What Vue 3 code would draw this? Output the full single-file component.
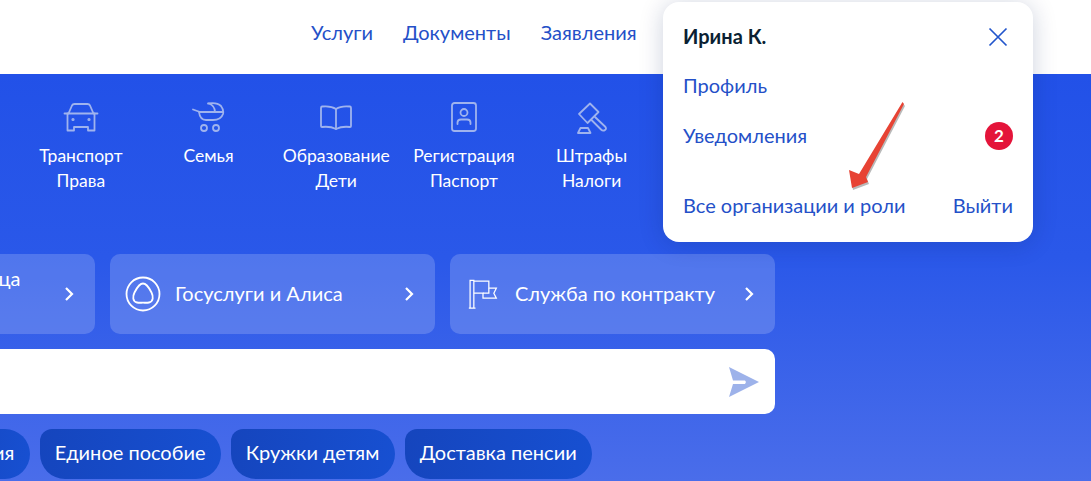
<script setup>
const topics = [
  { id: 'car', lines: ['Транспорт', 'Права'] },
  { id: 'pram', lines: ['Семья'] },
  { id: 'book', lines: ['Образование', 'Дети'] },
  { id: 'pass', lines: ['Регистрация', 'Паспорт'] },
  { id: 'gavel', lines: ['Штрафы', 'Налоги'] }
]
const chips = ['Пенсия', 'Единое пособие', 'Кружки детям', 'Доставка пенсии']
</script>

<template>
  <div class="page">
    <header class="top">
      <nav class="nav">
        <a>Услуги</a><a>Документы</a><a>Заявления</a>
      </nav>
    </header>
    <main class="hero">
      <ul class="topics">
        <li v-for="t in topics" :key="t.id" class="topic">
          <svg class="ticon" viewBox="0 0 36 32" fill="none" stroke="currentColor" stroke-width="1.800" stroke-linecap="round" stroke-linejoin="round">
            <template v-if="t.id === 'car'">
              <path d="M1.500 11.500H34.500" />
              <path d="M5.500 11.500 9 3.500Q9.700 2 11.500 2H24.500Q26.300 2 27 3.500L30.500 11.500" />
              <path d="M4.500 11.500V28.500H11V25H25V28.500H31.500V11.500" />
              <circle cx="10" cy="17.500" r=".7" />
              <circle cx="26" cy="17.500" r=".7" />
            </template>
            <template v-else-if="t.id === 'pram'">
              <path d="M2 7.500 9 10H32" />
              <path d="M17 1.500Q26 0 30 4Q33 8 32 12Q30 18 22 18H15Q9 18 8 10" />
              <path d="M18 1.500Q24 4 24 10" />
              <circle cx="13" cy="26" r="3" />
              <circle cx="25" cy="26" r="3" />
            </template>
            <template v-else-if="t.id === 'book'">
              <path d="M18 7Q13 3.500 4 4.500Q3 4.700 3 6V24Q3 25 4 25Q12 24 18 27Q24 24 32 25Q33 25 33 24V6Q33 4.700 32 4.500Q23 3.500 18 7Z" />
              <path d="M18 7V27" />
            </template>
            <template v-else-if="t.id === 'pass'">
              <rect x="6" y="1" width="24" height="28" rx="2.500" />
              <circle cx="18" cy="10.500" r="3.500" />
              <path d="M11.500 22V20.500Q11.500 17.500 15 17.500H21Q24.500 17.500 24.500 20.500V22" />
            </template>
            <template v-else>
              <path d="M16 1.500 5 12 13.500 21 24.500 10Z" />
              <path d="M21 15 31 24.500Q33 26.500 31 28Q29 29.500 27 27.500L17.500 18" />
              <path d="M4 31 6.500 26H14L16.500 31Z" />
            </template>
          </svg>
          <div class="tlabel"><span v-for="l in t.lines" :key="l">{{ l }}</span></div>
        </li>
      </ul>

      <div class="cards">
        <a class="card">
          <span class="ctext first">Мои данные для лица<br>ИП</span>
          <svg class="chev" viewBox="0 0 10 16" fill="none" stroke="currentColor" stroke-width="2.200"><path d="M2 2l6 6-6 6" /></svg>
        </a>
        <a class="card">
          <svg class="cicon" viewBox="0 0 36 36" fill="none" stroke="currentColor" stroke-width="1.800">
            <circle cx="18" cy="18" r="16.500" />
            <path d="M18 7.500C14 7.500 11.500 12.500 9.500 16.500C7.500 20.500 7.500 25.500 12 26.500C14.500 27 16 26.700 18 26.700C20 26.700 21.500 27 24 26.500C28.500 25.500 28.500 20.500 26.500 16.500C24.500 12.500 22 7.500 18 7.500Z" />
          </svg>
          <span class="ctext">Госуслуги и Алиса</span>
          <svg class="chev" viewBox="0 0 10 16" fill="none" stroke="currentColor" stroke-width="2.200"><path d="M2 2l6 6-6 6" /></svg>
        </a>
        <a class="card">
          <svg class="cicon flag" viewBox="0 0 36 36" fill="none" stroke="currentColor" stroke-width="1.500">
            <path d="M1 35H9M2.500 35V1.500H7V35" />
            <path d="M7 2.500H25V11H34L31 17 34 23H18V17H7" />
            <path d="M25 11V17H18" />
          </svg>
          <span class="ctext">Служба по контракту</span>
          <svg class="chev" viewBox="0 0 10 16" fill="none" stroke="currentColor" stroke-width="2.200"><path d="M2 2l6 6-6 6" /></svg>
        </a>
      </div>

      <div class="search">
        <svg class="send" viewBox="0 0 30 30"><path d="M0 0 30 15 0 30 4 17H16L17 15 16 13.500H4Z" /></svg>
      </div>

      <div class="chips">
        <a v-for="c in chips" :key="c" class="chip">{{ c }}</a>
      </div>
    </main>

    <aside class="menu">
      <div class="mhead">
        <strong>Ирина К.</strong>
        <svg class="close" viewBox="0 0 20 20" fill="none" stroke="currentColor" stroke-width="1.700"><path d="M1.500 1.500 18.500 18.500M18.500 1.500 1.500 18.500" /></svg>
      </div>
      <a class="mrow">Профиль</a>
      <a class="mrow note"><span class="ntext">Уведомления</span> <span class="badge">2</span></a>
      <div class="mfoot"><a>Все организации и роли</a><a>Выйти</a></div>
    </aside>

    <svg class="arrow" viewBox="0 0 70 100">
      <path class="ashadow" d="M55.500 3 57 5 19 78 21 83 5 89 2 71 12 75Z" />
      <path class="ahead" d="M54.500 1 56 3 18 76 20 81 4 87 1 69 11 73Z" />
    </svg>
  </div>
</template>

<style>
html, body { margin: 0; background: #fff; }
</style>

<style scoped>
.page {
  position: relative;
  width: 1091px;
  height: 481px;
  overflow: hidden;
  font-family: Lato, "Noto Sans", sans-serif;
  font-size: 20px;
  background: #fff;
}
.top { height: 74px; box-sizing: border-box; padding: 20px 0 0 311px; }
.nav { display: flex; gap: 30px; line-height: 24px; color: #2450c8; }
.hero {
  height: 407px;
  box-sizing: border-box;
  padding-top: 28px;
  color: #fff;
  background: linear-gradient(180deg, #2251e8 0%, #2a58e9 45%, #4a6dea 100%);
}
.topics { display: flex; list-style: none; margin: 0; padding: 0 0 0 17px; font-size: 17.500px; line-height: 25px; }
.topic { width: 127.700px; display: flex; flex-direction: column; align-items: center; }
.ticon { width: 36px; height: 32px; color: #9fb3ee; margin-bottom: 9px; }
.tlabel { display: flex; flex-direction: column; align-items: center; }
.cards { display: flex; gap: 15px; margin: 61px 0 0 -230px; }
.card {
  flex: none;
  box-sizing: border-box;
  width: 325px;
  height: 80px;
  padding: 0 21px 0 15px;
  display: flex;
  align-items: center;
  border-radius: 10px;
  background: rgba(255, 255, 255, .18);
}
.ctext { flex: 1; padding-bottom: 2px; }
.ctext.first { padding-left: 30px; line-height: 30px; }
.cicon { width: 36px; height: 36px; margin-right: 14px; flex: none; }
.cicon.flag { width: 30px; height: 30px; margin: 0 17px 0 3px; }
.chev { width: 10px; height: 16px; flex: none; }
.search {
  box-sizing: border-box;
  width: 775px;
  height: 65px;
  margin-top: 15px;
  padding-right: 16px;
  display: flex;
  align-items: center;
  justify-content: flex-end;
  background: #fff;
  border-radius: 0 10px 10px 0;
}
.send { width: 30px; height: 30px; fill: #9db2ea; }
.chips { display: flex; gap: 10px; margin: 15px 0 0 -68px; }
.chip {
  flex: none;
  height: 50px;
  line-height: 47px;
  padding: 0 15.200px;
  border-radius: 12px 25px 25px 25px;
  background: linear-gradient(100deg, #1545bd, #1750d2);
}
.menu {
  position: absolute;
  left: 663px;
  top: 2px;
  width: 370px;
  height: 240px;
  box-sizing: border-box;
  padding: 0 20px;
  background: #fff;
  border-radius: 16px;
  box-shadow: 0 2px 24px rgba(0, 30, 90, .2);
  color: #2450c8;
  line-height: 24px;
}
.mhead { display: flex; justify-content: space-between; align-items: flex-start; padding-top: 21px; color: #0b1f33; }
.mhead strong { font-weight: 700; margin-top: 1px; margin-bottom: -1px; }
.close { width: 20px; height: 20px; color: #2255cc; margin: 4px 5px 0 0; }
.mrow { display: flex; margin-top: 26px; }
.note { justify-content: space-between; align-items: center; margin-top: 25px; }
.ntext { padding-bottom: 2px; }
.badge {
  width: 28px;
  height: 28px;
  border-radius: 50%;
  background: #e4143a;
  color: #fff;
  font-weight: 700;
  font-size: 17px;
  text-align: center;
  line-height: 28px;
}
.mfoot { display: flex; justify-content: space-between; margin-top: 43px; }
.arrow { position: absolute; left: 848px; top: 101px; width: 70px; height: 100px; }
.ahead { fill: #e74334; }
.ashadow { fill: #b9b9b9; }
</style>
